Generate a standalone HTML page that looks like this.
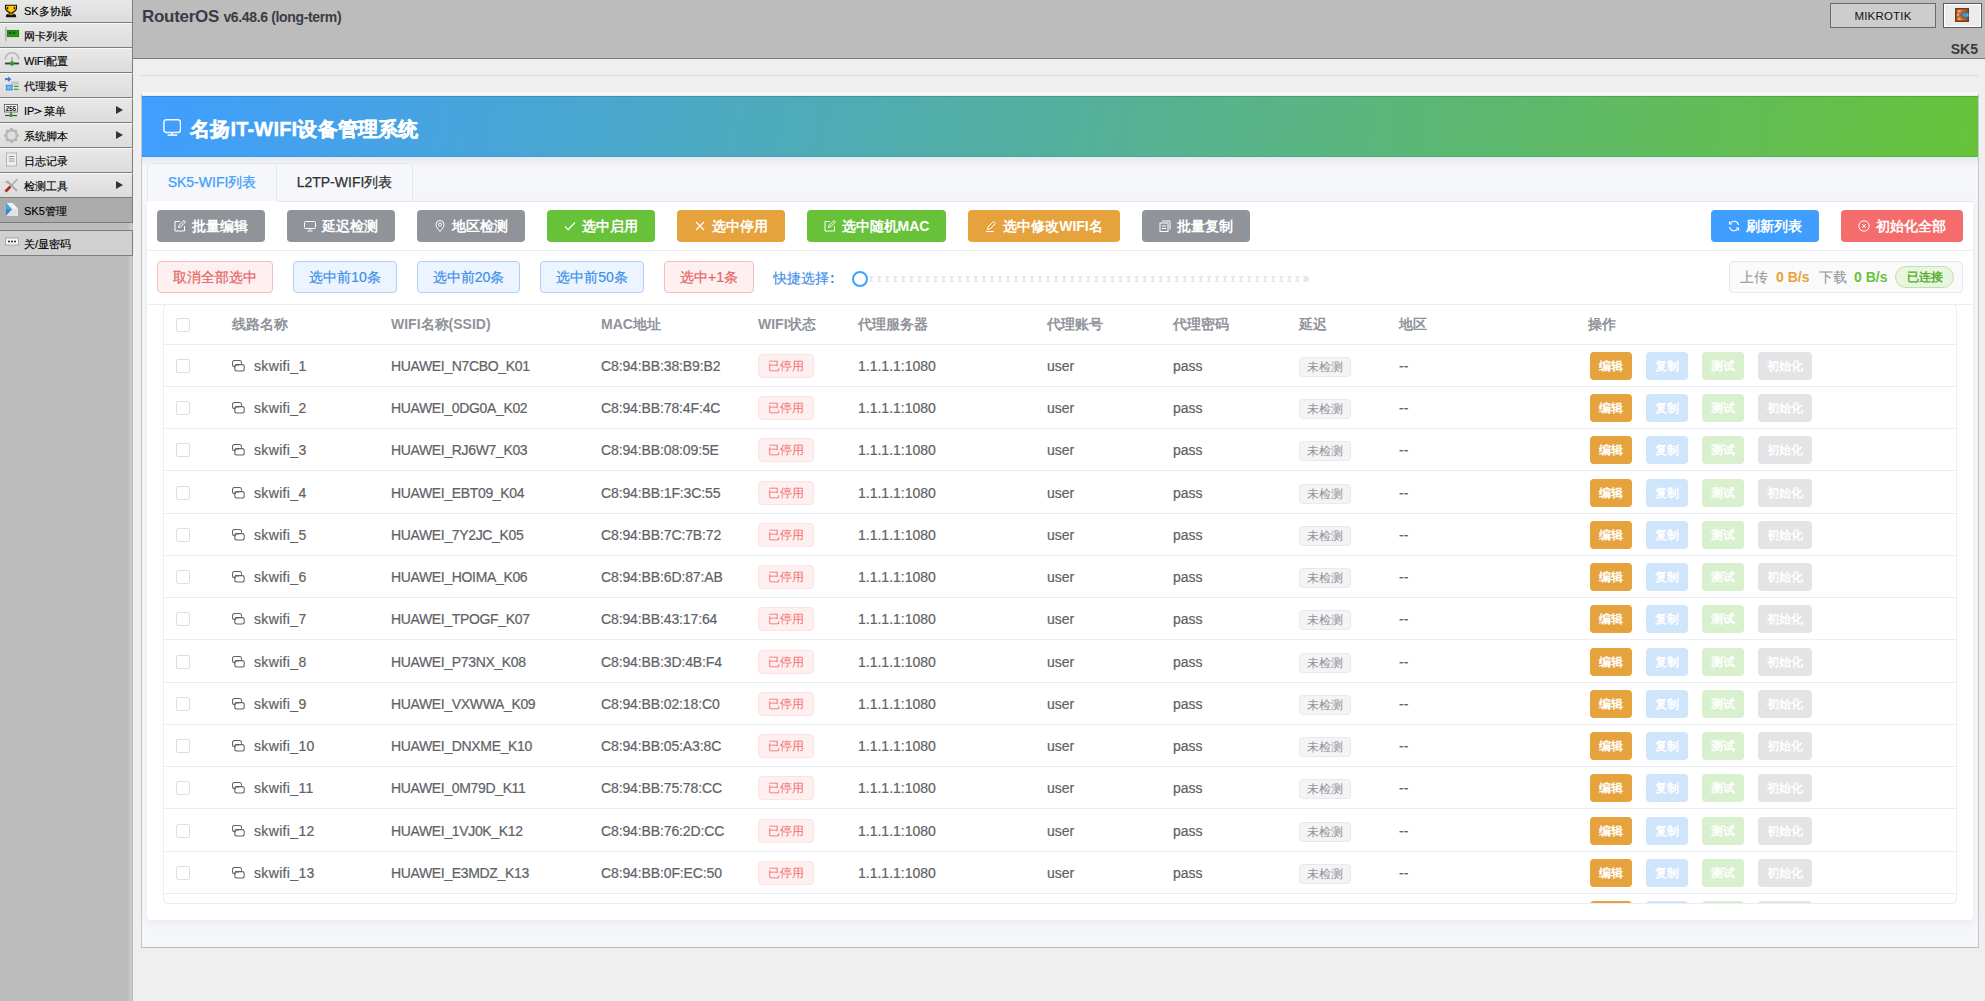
<!DOCTYPE html>
<html><head><meta charset="utf-8">
<style>
*{box-sizing:border-box;margin:0;padding:0}
html,body{width:1985px;height:1001px;overflow:hidden}
body{position:relative;background:#efefef;font-family:"Liberation Sans",sans-serif;color:#606266}
.abs{position:absolute}
/* sidebar */
#side{position:absolute;left:0;top:0;width:133px;height:1001px;background:linear-gradient(90deg,#bcbcbc 0,#bcbcbc 128px,#d0d0d0 131px,#bdbdbd 132px,#bdbdbd 133px)}
.mi{position:absolute;left:0;width:133px;height:25px;border-top:1px solid #f8f8f8;border-bottom:1px solid #7d7d7d;border-right:1px solid #7d7d7d;background:linear-gradient(#e8e8e8,#dcdcdc);font-size:11px;color:#000;line-height:25px;padding-left:24px;white-space:nowrap;-webkit-text-stroke:0.15px #000}
.mi .ic{position:absolute;left:4px;top:4px}
.mi .arr{position:absolute;left:116px;top:7px;width:0;height:0;border-top:4.5px solid transparent;border-bottom:4.5px solid transparent;border-left:7px solid #333}
.mi.sel{background:#ababab;border-top-color:#ababab}
.mi.pw{background:#d0d0d0;border-top-color:#7d7d7d;height:26px;line-height:26px}
/* topbar */
#top{position:absolute;left:133px;top:0;width:1852px;height:59px;background:#bcbcbc;border-bottom:1px solid #7b7b7b;border-left:0}
#vline{position:absolute;left:132px;top:0;width:1px;height:59px;background:#808080}
#ros{position:absolute;left:142px;top:7px;font-weight:bold;color:#3b3b45;white-space:nowrap}
#ros b{font-size:17px;letter-spacing:-0.3px}
#ros span{font-size:14px;letter-spacing:-0.35px}
#mk{position:absolute;left:1830px;top:3px;width:106px;height:25px;background:#cdcdcd;border:1px solid #6a6a6a;font-size:11.5px;letter-spacing:0.2px;color:#111;text-align:center;line-height:25px}
#lo{position:absolute;left:1943px;top:3px;width:39px;height:25px;background:#ececec;border:1px solid #5a5a5a;box-shadow:inset 0 0 0 1px #fff}
#sk5{position:absolute;right:7px;top:41px;font-size:14px;font-weight:bold;color:#3a3a3a}
/* content */
#hl{position:absolute;left:141px;top:75px;width:1837px;height:1px;background:#d9d9d9}
#panel{position:absolute;left:141px;top:93px;width:1838px;height:855px;background:linear-gradient(#efefef 0,#efefef 2px,#f5f6fa 2px,#f5f6fa 64px,#e8e8ee 64px,#f5f6fa 72px,#f5f6fa);border-top:1px solid #fff;border-left:1px solid #c6c6c6;border-right:1px solid #c6c6c6;border-bottom:1px solid #bdbdbd}
#hdr{position:absolute;left:142px;top:96px;width:1836px;height:61px;background:linear-gradient(100deg,#409eff,#67c23a);box-shadow:inset 0 1px rgba(0,0,0,.13),inset 0 -1px rgba(0,0,0,.08),0 1px #d8f2fb}
#hdr .t{position:absolute;left:48px;top:20px;font-size:20px;font-weight:bold;color:#fff;white-space:nowrap;letter-spacing:0.2px;-webkit-text-stroke:0.4px #fff}
#card{position:absolute;left:147px;top:163px;width:1826px;height:757px;background:#fff;border-radius:4px;box-shadow:0 2px 12px rgba(0,0,0,.06)}
#tabs{position:absolute;left:147px;top:163px;width:1826px;height:38px;background:#f5f7fa;border:1px solid #e4e7ed;border-bottom:1px solid #e4e7ed;border-radius:4px 4px 0 0}

#card{position:absolute;left:147px;top:201px;width:1826px;height:719px;background:#fff;border-radius:0 0 4px 4px;box-shadow:0 3px 10px rgba(0,0,0,.05)}
#tabline{position:absolute;left:147px;top:201px;width:1826px;height:1px;background:#e4e7ed}
.tab{position:absolute;top:163px;height:39px;background:#f5f7fa;border:1px solid #e4e7ed;border-bottom:0;font-size:14px;line-height:37px;text-align:center;color:#303133;white-space:nowrap;-webkit-text-stroke:0.25px #303133}
.tab.act{-webkit-text-stroke:0.25px #409eff;color:#409eff;background:#f5f7fa;border-bottom:1px solid #fff;height:39px}
.btn{position:absolute;height:32px;border-radius:4px;color:#fff;font-size:14px;font-weight:bold;line-height:32px;text-align:center;white-space:nowrap}
.btn svg{vertical-align:-1px;margin-right:6px}
.g{background:#909399}.gr{background:#67c23a}.o{background:#e6a23c}.b{background:#409eff}.r{background:#f56c6c}
.pb{position:absolute;top:261px;height:32px;border-radius:4px;font-size:14px;line-height:30px;text-align:center;white-space:nowrap}
.pr{background:#fef0f0;border:1px solid #f3bdbd;color:#e46464;-webkit-text-stroke:0.2px #e46464}
.pbl{background:#ecf5ff;border:1px solid #acd0f4;color:#3d8fe8;-webkit-text-stroke:0.2px #3d8fe8}
#div1{position:absolute;left:147px;top:250px;width:1826px;height:1px;background:#ebeef5}
#div2{position:absolute;left:147px;top:304px;width:1826px;height:1px;background:#ebeef5}
#quick{position:absolute;left:773px;top:267.5px;font-size:14px;color:#3f8ee8;line-height:20px;-webkit-text-stroke:0.15px #3f8ee8}
#dots{position:absolute;left:0;top:0;width:0;height:0}
#knob{position:absolute;left:852px;top:271px;width:16px;height:16px;border:2px solid #409eff;border-radius:50%;background:#fff}
#stat{position:absolute;left:1729px;top:261px;width:234px;height:32px;border:1px solid #e4e7ed;border-radius:4px;background:#fafafa;font-size:14px;line-height:30px;white-space:nowrap}
#stat span{position:absolute;top:0}
#conn{position:absolute;left:165px;top:4px;width:59px;height:22px;border-radius:11px;background:#e8f6e0;border:1px solid #bfe3ab;color:#5aad32;font-size:12px;font-weight:bold;line-height:21px;text-align:center}

#tbl{position:absolute;left:163px;top:304px;width:1794px;height:600px;border:1px solid #ebeef5;border-radius:4px;overflow:hidden;background:#fff}
.row{position:absolute;left:0;width:1792px;height:42px;border-bottom:1px solid #ebeef5;font-size:14px;color:#606266;line-height:42px;white-space:nowrap}
.row>span{-webkit-text-stroke:0.2px #606266}
.row.hd>span{-webkit-text-stroke:0}
.row>*{position:absolute}
.hd{color:#909399;font-weight:bold;height:40px;line-height:39px}
.cb{width:14px;height:14px;border:1px solid #dcdfe6;border-radius:2px;background:#fff}
.lk{top:15px}
.tag1{height:24px;width:56px;border:1px solid #fde2e2;background:#fef0f0;color:#f56c6c;border-radius:4px;font-size:12px;line-height:22px;text-align:center}
.tag2{height:20px;width:52px;border:1px solid #e9e9eb;background:#f4f4f5;color:#909399;border-radius:4px;font-size:12px;line-height:18px;text-align:center}
.mb{height:28px;border-radius:4px;color:#fff;font-size:12px;font-weight:bold;line-height:28px;text-align:center}
.me{background:#e6a23c}.mc{background:#cfe5fc}.mt{background:#d9f0ce}.mi2{background:#e3e4e6}
</style></head><body>
<div id="side">
<div class="mi" style="top:-2px"><svg class="ic" width="22" height="22" viewBox="0 0 22 22" style="left:0;top:0"><path d="M5.5 6.3H16.5V9.3C16.5 11.6 14.3 12.8 12 13.8V14.8C13.8 15 15.6 15.8 15.6 17.6H6.4C6.4 15.8 8.2 15 10 14.8V13.8C7.7 12.8 5.5 11.6 5.5 9.3Z" fill="#f4b800" stroke="#1c1408" stroke-width="1.1"/><path d="M9 7.2h4v4.5c-1.2 0.6-2.8 0.6-4 0z" fill="#ffc81a"/><ellipse cx="7.5" cy="9.1" rx="0.75" ry="1.2" fill="#2a0a00"/><ellipse cx="14.5" cy="9.1" rx="0.75" ry="1.2" fill="#2a0a00"/><path d="M6.6 16.6h8.8" stroke="#1c1408" stroke-width="1.4"/></svg><span class="tx">SK多协版</span></div>
<div class="mi" style="top:23px"><svg class="ic" width="22" height="22" viewBox="0 0 22 22" style="left:0;top:0"><rect x="5" y="3" width="1.6" height="14" fill="#b4b8b8"/><rect x="7" y="6" width="12" height="7" fill="#239a1a"/><rect x="7.2" y="6.2" width="11.6" height="6.6" fill="none" stroke="#1a7012" stroke-width="0.5"/><rect x="8.6" y="7.6" width="2.6" height="2.6" fill="#165a10"/><rect x="12.6" y="7.6" width="2.6" height="2.6" fill="#165a10"/><path d="M7.5 13.5h11" stroke="#c8e680" stroke-width="1.2" stroke-dasharray="1 1"/></svg><span class="tx">网卡列表</span></div>
<div class="mi" style="top:48px"><svg class="ic" width="22" height="22" viewBox="0 0 22 22" style="left:0;top:0"><path d="M5.2 10.5a6.8 6.8 0 0 1 13.6 0" fill="none" stroke="#b8bcbc" stroke-width="1.8"/><path d="M12 8v6" stroke="#a8acac" stroke-width="1.6"/><path d="M5 14.5h14" stroke="#3a3a3a" stroke-width="1.8"/><circle cx="12" cy="14.5" r="2.2" fill="#1ea81e"/></svg><span class="tx">WiFi配置</span></div>
<div class="mi" style="top:73px"><svg class="ic" width="22" height="22" viewBox="0 0 22 22" style="left:0;top:0"><path d="M5 5.2h4" stroke="#3a78c4" stroke-width="2"/><path d="M8.2 2.5L11.3 5.2 8.2 8z" fill="#3a78c4"/><rect x="11" y="7.6" width="8" height="3" fill="#c4c4c4"/><rect x="6.3" y="11.3" width="5.8" height="4.6" fill="#7ab8ee" stroke="#3a88d8" stroke-width="1"/><path d="M14 12.4h4.5M14 15.4h4.5" stroke="#3aa03a" stroke-width="1.4"/></svg><span class="tx">代理拨号</span></div>
<div class="mi" style="top:98px"><svg class="ic" width="15" height="15" viewBox="0 0 15 15" style="left:4px;top:5px"><rect x="0.5" y="0.5" width="13" height="7.5" fill="#fafafa" stroke="#555" stroke-width="0.8"/><text x="1.6" y="6.6" font-size="6.4" font-family="Liberation Mono" font-weight="bold" fill="#111" textLength="10.8">255</text><path d="M7 8v3" stroke="#333" stroke-width="1"/><path d="M1 11.5h12" stroke="#444" stroke-width="1.2"/><circle cx="7" cy="11.5" r="1.8" fill="#22aa22"/></svg><span class="tx">IP<svg width="9" height="8" viewBox="0 0 9 8" style="vertical-align:0px;margin:0 1px 0 0"><path d="M0.5 1.2L8.5 4.3 0.5 7.2 0.5 6.2 5.5 4.3 0.5 2.4z" fill="#111"/></svg>菜单</span><span class="arr"></span></div>
<div class="mi" style="top:123px"><svg class="ic" width="15" height="15" viewBox="0 0 15 15" style="left:4px;top:4px"><circle cx="7.5" cy="7.5" r="5.2" fill="none" stroke="#b4b9b6" stroke-width="2.4"/><g stroke="#b4b9b6" stroke-width="2.6"><path d="M7.5 0v2.5M7.5 12.5V15M0 7.5h2.5M12.5 7.5H15M2.2 2.2l1.8 1.8M11 11l1.8 1.8M2.2 12.8L4 11M11 4l1.8-1.8"/></g><circle cx="7.5" cy="7.5" r="3.4" fill="#dedede"/></svg><span class="tx">系统脚本</span><span class="arr"></span></div>
<div class="mi" style="top:148px"><svg class="ic" width="15" height="15" viewBox="0 0 15 15" style="left:5px;top:3px"><rect x="1.5" y="1" width="10" height="13" fill="#eef0ee" stroke="#b0b4b2" stroke-width="1"/><path d="M3.8 4.5h5.5M3.8 6.8h5.5M3.8 9.1h5.5" stroke="#8a8e8c" stroke-width="0.9"/></svg><span class="tx">日志记录</span></div>
<div class="mi" style="top:173px"><svg class="ic" width="15" height="15" viewBox="0 0 15 15" style="left:4px;top:4px"><path d="M3 3l10 10" stroke="#a8acaa" stroke-width="1.8"/><path d="M13.5 1.2L6.5 8.2" stroke="#a8acaa" stroke-width="1.6"/><path d="M1.5 3.5a2.3 2.3 0 0 0 3.2 1" fill="none" stroke="#a8acaa" stroke-width="1.4"/><path d="M6.5 8.5L1.5 13.5" stroke="#b82030" stroke-width="2.6"/></svg><span class="tx">检测工具</span><span class="arr"></span></div>
<div class="mi sel" style="top:198px"><svg class="ic" width="22" height="22" viewBox="0 0 22 22" style="left:0;top:0"><path d="M6.5 4h6l5.5 5.5V17H6.5z" fill="#f2f4f4"/><path d="M12.5 4.5l5 5h-5z" fill="#fbfbfb" stroke="#d8dcdc" stroke-width="0.4"/><path d="M6.5 10.5H18V17H6.5z" fill="#dfe3e3"/><path d="M6 3.8l6 6.5-6 6.5z" fill="#2f8ad0"/><path d="M6 3.8l6 6.5H6z" fill="#4aa8e8"/></svg><span class="tx">SK5管理</span></div>
<div class="mi pw" style="top:230px"><svg class="ic" width="14" height="14" viewBox="0 0 14 14" style="left:5px"><rect x="0.5" y="3" width="13" height="7" fill="#f6f6f6" stroke="#999" stroke-width="0.8"/><circle cx="4" cy="6.5" r="0.9" fill="#111"/><circle cx="7" cy="6.5" r="0.9" fill="#111"/><circle cx="10" cy="6.5" r="0.9" fill="#111"/></svg><span class="tx">关/显密码</span></div>
</div>
<div id="top"></div><div id="vline"></div>
<div id="ros"><b>RouterOS</b> <span>v6.48.6 (long-term)</span></div>
<div id="mk">MIKROTIK</div>
<div id="lo"><svg style="position:absolute;left:11px;top:4px" width="14" height="14" viewBox="0 0 14 14"><rect x="0" y="0" width="14" height="14" fill="#7a3a10"/><rect x="1.5" y="1.5" width="11" height="11" fill="#b86a38"/><path d="M2 2h5l-3 3M2 12h5l-3-3" fill="#e8a878"/><rect x="2" y="5.5" width="2" height="2.5" fill="#e8a878"/><path d="M12.5 1.5v11L5.5 7z" fill="#7a4a28"/><path d="M11.5 3.5v7L6.5 7z" fill="#2aa0e8"/><path d="M11.5 5.5v3h2v-3z" fill="#5ab8f0"/></svg></div>
<div id="sk5">SK5</div>
<div id="hl"></div>
<div id="panel"></div>
<div id="hdr"><svg style="position:absolute;left:21px;top:23px" width="18" height="18" viewBox="0 0 18 18"><rect x="0.9" y="0.8" width="16.6" height="12.6" rx="2.6" fill="none" stroke="#f0f8ff" stroke-width="1.5"/><path d="M9.1 13.3v2.6" stroke="#f0f8ff" stroke-width="1.6"/><path d="M4.6 16.1h9.6" stroke="#f0f8ff" stroke-width="1.6"/></svg><div class="t">名扬IT-WIFI设备管理系统</div></div>
<div id="card"></div>
<div class="tab" style="left:276px;width:137px">L2TP-WIFI列表</div>
<div id="tabline"></div>
<div class="tab act" style="left:147px;width:130px">SK5-WIFI列表</div>
<div class="btn g" style="left:157px;top:210px;width:108px"><svg width="12" height="12" viewBox="0 0 12 12"><path d="M6 1.5H1v9.5h9.5V6" fill="none" stroke="#fff" stroke-width="1"/><path d="M4.5 7.5l.4-2L10 .5l1.5 1.5-5 5z" fill="none" stroke="#fff" stroke-width="1"/></svg>批量编辑</div>
<div class="btn g" style="left:287px;top:210px;width:108px"><svg width="12" height="12" viewBox="0 0 12 12"><rect x="0.5" y="1.5" width="11" height="7" rx="1" fill="none" stroke="#fff" stroke-width="1"/><path d="M6 8.5v2M3.5 11h5" stroke="#fff" stroke-width="1"/></svg>延迟检测</div>
<div class="btn g" style="left:417px;top:210px;width:108px"><svg width="12" height="12" viewBox="0 0 12 12"><path d="M6 11.5C3.5 8.5 2 6.5 2 4.5a4 4 0 0 1 8 0c0 2-1.5 4-4 7z" fill="none" stroke="#fff" stroke-width="1"/><circle cx="6" cy="4.6" r="1.5" fill="none" stroke="#fff" stroke-width="1"/></svg>地区检测</div>
<div class="btn gr" style="left:547px;top:210px;width:108px"><svg width="12" height="12" viewBox="0 0 12 12"><path d="M1 6.5l3.2 3.2L11 2.5" fill="none" stroke="#fff" stroke-width="1.2"/></svg>选中启用</div>
<div class="btn o" style="left:677px;top:210px;width:108px"><svg width="12" height="12" viewBox="0 0 12 12"><path d="M2 2l8 8M10 2l-8 8" fill="none" stroke="#fff" stroke-width="1.1"/></svg>选中停用</div>
<div class="btn gr" style="left:807px;top:210px;width:139px"><svg width="12" height="12" viewBox="0 0 12 12"><path d="M6 1.5H1v9.5h9.5V6" fill="none" stroke="#fff" stroke-width="1"/><path d="M4.5 7.5l.4-2L10 .5l1.5 1.5-5 5z" fill="none" stroke="#fff" stroke-width="1"/></svg>选中随机MAC</div>
<div class="btn o" style="left:968px;top:210px;width:152px"><svg width="12" height="12" viewBox="0 0 12 12"><path d="M2.5 9.5l.5-2.5L8.5 1.5l2 2L5 9z" fill="none" stroke="#fff" stroke-width="1"/><path d="M1 11.5h8" stroke="#fff" stroke-width="1"/></svg>选中修改WIFI名</div>
<div class="btn g" style="left:1142px;top:210px;width:108px"><svg width="12" height="12" viewBox="0 0 12 12"><rect x="1" y="3" width="8" height="8.5" fill="none" stroke="#fff" stroke-width="1"/><path d="M3 1h8v8.5" fill="none" stroke="#fff" stroke-width="1"/><path d="M3 6h4M3 8.5h4" stroke="#fff" stroke-width="1"/></svg>批量复制</div>
<div class="btn b" style="left:1711px;top:210px;width:108px"><svg width="12" height="12" viewBox="0 0 12 12"><path d="M10.5 5A4.6 4.6 0 0 0 2 3.5M1.5 7A4.6 4.6 0 0 0 10 8.5" fill="none" stroke="#fff" stroke-width="1.1"/><path d="M1.5 1.5v2.5H4M10.5 10.5V8H8" fill="none" stroke="#fff" stroke-width="1.1"/></svg>刷新列表</div>
<div class="btn r" style="left:1841px;top:210px;width:122px"><svg width="12" height="12" viewBox="0 0 12 12"><circle cx="6" cy="6" r="5.2" fill="none" stroke="#fff" stroke-width="1"/><path d="M4 4l4 4M8 4l-4 4" stroke="#fff" stroke-width="1"/></svg>初始化全部</div>
<div id="div1"></div>
<div class="pb pr" style="left:157px;width:116px">取消全部选中</div>
<div class="pb pbl" style="left:293px;width:104px">选中前10条</div>
<div class="pb pbl" style="left:417px;width:103px">选中前20条</div>
<div class="pb pbl" style="left:540px;width:104px">选中前50条</div>
<div class="pb pr" style="left:664px;width:90px">选中+1条</div>
<div id="quick">快捷选择<b style="font-weight:bold;margin-left:1px">:</b></div><div id="dots"><svg style="position:absolute;left:0;top:0" width="1985" height="1001"><g fill="#e4e7ed"><path d="M869.00 276h4.5v1.2h-1.3v3.6h1.3v1.2h-4.5v-1.2h1.3v-3.6h-1.3z"/><path d="M877.04 276h4.5v1.2h-1.3v3.6h1.3v1.2h-4.5v-1.2h1.3v-3.6h-1.3z"/><path d="M885.08 276h4.5v1.2h-1.3v3.6h1.3v1.2h-4.5v-1.2h1.3v-3.6h-1.3z"/><path d="M893.12 276h4.5v1.2h-1.3v3.6h1.3v1.2h-4.5v-1.2h1.3v-3.6h-1.3z"/><path d="M901.16 276h4.5v1.2h-1.3v3.6h1.3v1.2h-4.5v-1.2h1.3v-3.6h-1.3z"/><path d="M909.20 276h4.5v1.2h-1.3v3.6h1.3v1.2h-4.5v-1.2h1.3v-3.6h-1.3z"/><path d="M917.24 276h4.5v1.2h-1.3v3.6h1.3v1.2h-4.5v-1.2h1.3v-3.6h-1.3z"/><path d="M925.28 276h4.5v1.2h-1.3v3.6h1.3v1.2h-4.5v-1.2h1.3v-3.6h-1.3z"/><path d="M933.32 276h4.5v1.2h-1.3v3.6h1.3v1.2h-4.5v-1.2h1.3v-3.6h-1.3z"/><path d="M941.36 276h4.5v1.2h-1.3v3.6h1.3v1.2h-4.5v-1.2h1.3v-3.6h-1.3z"/><path d="M949.40 276h4.5v1.2h-1.3v3.6h1.3v1.2h-4.5v-1.2h1.3v-3.6h-1.3z"/><path d="M957.44 276h4.5v1.2h-1.3v3.6h1.3v1.2h-4.5v-1.2h1.3v-3.6h-1.3z"/><path d="M965.48 276h4.5v1.2h-1.3v3.6h1.3v1.2h-4.5v-1.2h1.3v-3.6h-1.3z"/><path d="M973.52 276h4.5v1.2h-1.3v3.6h1.3v1.2h-4.5v-1.2h1.3v-3.6h-1.3z"/><path d="M981.56 276h4.5v1.2h-1.3v3.6h1.3v1.2h-4.5v-1.2h1.3v-3.6h-1.3z"/><path d="M989.60 276h4.5v1.2h-1.3v3.6h1.3v1.2h-4.5v-1.2h1.3v-3.6h-1.3z"/><path d="M997.64 276h4.5v1.2h-1.3v3.6h1.3v1.2h-4.5v-1.2h1.3v-3.6h-1.3z"/><path d="M1005.68 276h4.5v1.2h-1.3v3.6h1.3v1.2h-4.5v-1.2h1.3v-3.6h-1.3z"/><path d="M1013.72 276h4.5v1.2h-1.3v3.6h1.3v1.2h-4.5v-1.2h1.3v-3.6h-1.3z"/><path d="M1021.76 276h4.5v1.2h-1.3v3.6h1.3v1.2h-4.5v-1.2h1.3v-3.6h-1.3z"/><path d="M1029.80 276h4.5v1.2h-1.3v3.6h1.3v1.2h-4.5v-1.2h1.3v-3.6h-1.3z"/><path d="M1037.84 276h4.5v1.2h-1.3v3.6h1.3v1.2h-4.5v-1.2h1.3v-3.6h-1.3z"/><path d="M1045.88 276h4.5v1.2h-1.3v3.6h1.3v1.2h-4.5v-1.2h1.3v-3.6h-1.3z"/><path d="M1053.92 276h4.5v1.2h-1.3v3.6h1.3v1.2h-4.5v-1.2h1.3v-3.6h-1.3z"/><path d="M1061.96 276h4.5v1.2h-1.3v3.6h1.3v1.2h-4.5v-1.2h1.3v-3.6h-1.3z"/><path d="M1070.00 276h4.5v1.2h-1.3v3.6h1.3v1.2h-4.5v-1.2h1.3v-3.6h-1.3z"/><path d="M1078.04 276h4.5v1.2h-1.3v3.6h1.3v1.2h-4.5v-1.2h1.3v-3.6h-1.3z"/><path d="M1086.08 276h4.5v1.2h-1.3v3.6h1.3v1.2h-4.5v-1.2h1.3v-3.6h-1.3z"/><path d="M1094.12 276h4.5v1.2h-1.3v3.6h1.3v1.2h-4.5v-1.2h1.3v-3.6h-1.3z"/><path d="M1102.16 276h4.5v1.2h-1.3v3.6h1.3v1.2h-4.5v-1.2h1.3v-3.6h-1.3z"/><path d="M1110.20 276h4.5v1.2h-1.3v3.6h1.3v1.2h-4.5v-1.2h1.3v-3.6h-1.3z"/><path d="M1118.24 276h4.5v1.2h-1.3v3.6h1.3v1.2h-4.5v-1.2h1.3v-3.6h-1.3z"/><path d="M1126.28 276h4.5v1.2h-1.3v3.6h1.3v1.2h-4.5v-1.2h1.3v-3.6h-1.3z"/><path d="M1134.32 276h4.5v1.2h-1.3v3.6h1.3v1.2h-4.5v-1.2h1.3v-3.6h-1.3z"/><path d="M1142.36 276h4.5v1.2h-1.3v3.6h1.3v1.2h-4.5v-1.2h1.3v-3.6h-1.3z"/><path d="M1150.40 276h4.5v1.2h-1.3v3.6h1.3v1.2h-4.5v-1.2h1.3v-3.6h-1.3z"/><path d="M1158.44 276h4.5v1.2h-1.3v3.6h1.3v1.2h-4.5v-1.2h1.3v-3.6h-1.3z"/><path d="M1166.48 276h4.5v1.2h-1.3v3.6h1.3v1.2h-4.5v-1.2h1.3v-3.6h-1.3z"/><path d="M1174.52 276h4.5v1.2h-1.3v3.6h1.3v1.2h-4.5v-1.2h1.3v-3.6h-1.3z"/><path d="M1182.56 276h4.5v1.2h-1.3v3.6h1.3v1.2h-4.5v-1.2h1.3v-3.6h-1.3z"/><path d="M1190.60 276h4.5v1.2h-1.3v3.6h1.3v1.2h-4.5v-1.2h1.3v-3.6h-1.3z"/><path d="M1198.64 276h4.5v1.2h-1.3v3.6h1.3v1.2h-4.5v-1.2h1.3v-3.6h-1.3z"/><path d="M1206.68 276h4.5v1.2h-1.3v3.6h1.3v1.2h-4.5v-1.2h1.3v-3.6h-1.3z"/><path d="M1214.72 276h4.5v1.2h-1.3v3.6h1.3v1.2h-4.5v-1.2h1.3v-3.6h-1.3z"/><path d="M1222.76 276h4.5v1.2h-1.3v3.6h1.3v1.2h-4.5v-1.2h1.3v-3.6h-1.3z"/><path d="M1230.80 276h4.5v1.2h-1.3v3.6h1.3v1.2h-4.5v-1.2h1.3v-3.6h-1.3z"/><path d="M1238.84 276h4.5v1.2h-1.3v3.6h1.3v1.2h-4.5v-1.2h1.3v-3.6h-1.3z"/><path d="M1246.88 276h4.5v1.2h-1.3v3.6h1.3v1.2h-4.5v-1.2h1.3v-3.6h-1.3z"/><path d="M1254.92 276h4.5v1.2h-1.3v3.6h1.3v1.2h-4.5v-1.2h1.3v-3.6h-1.3z"/><path d="M1262.96 276h4.5v1.2h-1.3v3.6h1.3v1.2h-4.5v-1.2h1.3v-3.6h-1.3z"/><path d="M1271.00 276h4.5v1.2h-1.3v3.6h1.3v1.2h-4.5v-1.2h1.3v-3.6h-1.3z"/><path d="M1279.04 276h4.5v1.2h-1.3v3.6h1.3v1.2h-4.5v-1.2h1.3v-3.6h-1.3z"/><path d="M1287.08 276h4.5v1.2h-1.3v3.6h1.3v1.2h-4.5v-1.2h1.3v-3.6h-1.3z"/><path d="M1295.12 276h4.5v1.2h-1.3v3.6h1.3v1.2h-4.5v-1.2h1.3v-3.6h-1.3z"/><path d="M1303.5 276h2.5a3 3 0 0 1 0 6h-2.5z"/></g></svg></div><div id="knob"></div>
<div id="stat"><span style="left:10px;color:#909399">上传</span><span style="left:46px;color:#e6a23c;font-weight:bold">0 B/s</span><span style="left:89px;color:#909399">下载</span><span style="left:124px;color:#67c23a;font-weight:bold">0 B/s</span><div id="conn">已连接</div></div>
<div id="div2"></div>
<div id="tbl">
<div class="row hd" style="top:0"><div class="cb" style="left:12px;top:13px"></div><span style="left:68px">线路名称</span><span style="left:227px">WIFI名称(SSID)</span><span style="left:437px">MAC地址</span><span style="left:594px">WIFI状态</span><span style="left:694px">代理服务器</span><span style="left:883px">代理账号</span><span style="left:1009px">代理密码</span><span style="left:1135px">延迟</span><span style="left:1235px">地区</span><span style="left:1424px">操作</span></div>
<div class="row" style="top:40px"><div class="cb" style="left:12px;top:14px"></div><span class="lk" style="left:68px;line-height:0"><svg width="13" height="12" viewBox="0 0 13 12"><path d="M4 6.8H2.5a2 2 0 0 1-2-2V2.5a2 2 0 0 1 2-2h5a2 2 0 0 1 2 2v1.2" fill="none" stroke="#606266" stroke-width="1.05"/><rect x="2.8" y="4.6" width="9.4" height="6.3" rx="2" fill="none" stroke="#606266" stroke-width="1.05"/><path d="M2.8 4.9h4.2" stroke="#606266" stroke-width="1.05"/></svg></span><span style="left:90px;letter-spacing:0.35px">skwifi_1</span><span style="left:227px;letter-spacing:-0.35px">HUAWEI_N7CBO_K01</span><span style="left:437px;letter-spacing:-0.12px">C8:94:BB:38:B9:B2</span><div class="tag1" style="left:594px;top:9px">已停用</div><span style="left:694px">1.1.1.1:1080</span><span style="left:883px">user</span><span style="left:1009px">pass</span><div class="tag2" style="left:1135px;top:12px">未检测</div><span style="left:1235px">--</span><div class="mb me" style="left:1426px;top:7px;width:42px">编辑</div><div class="mb mc" style="left:1482px;top:7px;width:42px">复制</div><div class="mb mt" style="left:1538px;top:7px;width:42px">测试</div><div class="mb mi2" style="left:1594px;top:7px;width:54px">初始化</div></div>
<div class="row" style="top:82px"><div class="cb" style="left:12px;top:14px"></div><span class="lk" style="left:68px;line-height:0"><svg width="13" height="12" viewBox="0 0 13 12"><path d="M4 6.8H2.5a2 2 0 0 1-2-2V2.5a2 2 0 0 1 2-2h5a2 2 0 0 1 2 2v1.2" fill="none" stroke="#606266" stroke-width="1.05"/><rect x="2.8" y="4.6" width="9.4" height="6.3" rx="2" fill="none" stroke="#606266" stroke-width="1.05"/><path d="M2.8 4.9h4.2" stroke="#606266" stroke-width="1.05"/></svg></span><span style="left:90px;letter-spacing:0.35px">skwifi_2</span><span style="left:227px;letter-spacing:-0.35px">HUAWEI_0DG0A_K02</span><span style="left:437px;letter-spacing:-0.12px">C8:94:BB:78:4F:4C</span><div class="tag1" style="left:594px;top:9px">已停用</div><span style="left:694px">1.1.1.1:1080</span><span style="left:883px">user</span><span style="left:1009px">pass</span><div class="tag2" style="left:1135px;top:12px">未检测</div><span style="left:1235px">--</span><div class="mb me" style="left:1426px;top:7px;width:42px">编辑</div><div class="mb mc" style="left:1482px;top:7px;width:42px">复制</div><div class="mb mt" style="left:1538px;top:7px;width:42px">测试</div><div class="mb mi2" style="left:1594px;top:7px;width:54px">初始化</div></div>
<div class="row" style="top:124px"><div class="cb" style="left:12px;top:14px"></div><span class="lk" style="left:68px;line-height:0"><svg width="13" height="12" viewBox="0 0 13 12"><path d="M4 6.8H2.5a2 2 0 0 1-2-2V2.5a2 2 0 0 1 2-2h5a2 2 0 0 1 2 2v1.2" fill="none" stroke="#606266" stroke-width="1.05"/><rect x="2.8" y="4.6" width="9.4" height="6.3" rx="2" fill="none" stroke="#606266" stroke-width="1.05"/><path d="M2.8 4.9h4.2" stroke="#606266" stroke-width="1.05"/></svg></span><span style="left:90px;letter-spacing:0.35px">skwifi_3</span><span style="left:227px;letter-spacing:-0.35px">HUAWEI_RJ6W7_K03</span><span style="left:437px;letter-spacing:-0.12px">C8:94:BB:08:09:5E</span><div class="tag1" style="left:594px;top:9px">已停用</div><span style="left:694px">1.1.1.1:1080</span><span style="left:883px">user</span><span style="left:1009px">pass</span><div class="tag2" style="left:1135px;top:12px">未检测</div><span style="left:1235px">--</span><div class="mb me" style="left:1426px;top:7px;width:42px">编辑</div><div class="mb mc" style="left:1482px;top:7px;width:42px">复制</div><div class="mb mt" style="left:1538px;top:7px;width:42px">测试</div><div class="mb mi2" style="left:1594px;top:7px;width:54px">初始化</div></div>
<div class="row" style="top:167px"><div class="cb" style="left:12px;top:14px"></div><span class="lk" style="left:68px;line-height:0"><svg width="13" height="12" viewBox="0 0 13 12"><path d="M4 6.8H2.5a2 2 0 0 1-2-2V2.5a2 2 0 0 1 2-2h5a2 2 0 0 1 2 2v1.2" fill="none" stroke="#606266" stroke-width="1.05"/><rect x="2.8" y="4.6" width="9.4" height="6.3" rx="2" fill="none" stroke="#606266" stroke-width="1.05"/><path d="M2.8 4.9h4.2" stroke="#606266" stroke-width="1.05"/></svg></span><span style="left:90px;letter-spacing:0.35px">skwifi_4</span><span style="left:227px;letter-spacing:-0.35px">HUAWEI_EBT09_K04</span><span style="left:437px;letter-spacing:-0.12px">C8:94:BB:1F:3C:55</span><div class="tag1" style="left:594px;top:9px">已停用</div><span style="left:694px">1.1.1.1:1080</span><span style="left:883px">user</span><span style="left:1009px">pass</span><div class="tag2" style="left:1135px;top:12px">未检测</div><span style="left:1235px">--</span><div class="mb me" style="left:1426px;top:7px;width:42px">编辑</div><div class="mb mc" style="left:1482px;top:7px;width:42px">复制</div><div class="mb mt" style="left:1538px;top:7px;width:42px">测试</div><div class="mb mi2" style="left:1594px;top:7px;width:54px">初始化</div></div>
<div class="row" style="top:209px"><div class="cb" style="left:12px;top:14px"></div><span class="lk" style="left:68px;line-height:0"><svg width="13" height="12" viewBox="0 0 13 12"><path d="M4 6.8H2.5a2 2 0 0 1-2-2V2.5a2 2 0 0 1 2-2h5a2 2 0 0 1 2 2v1.2" fill="none" stroke="#606266" stroke-width="1.05"/><rect x="2.8" y="4.6" width="9.4" height="6.3" rx="2" fill="none" stroke="#606266" stroke-width="1.05"/><path d="M2.8 4.9h4.2" stroke="#606266" stroke-width="1.05"/></svg></span><span style="left:90px;letter-spacing:0.35px">skwifi_5</span><span style="left:227px;letter-spacing:-0.35px">HUAWEI_7Y2JC_K05</span><span style="left:437px;letter-spacing:-0.12px">C8:94:BB:7C:7B:72</span><div class="tag1" style="left:594px;top:9px">已停用</div><span style="left:694px">1.1.1.1:1080</span><span style="left:883px">user</span><span style="left:1009px">pass</span><div class="tag2" style="left:1135px;top:12px">未检测</div><span style="left:1235px">--</span><div class="mb me" style="left:1426px;top:7px;width:42px">编辑</div><div class="mb mc" style="left:1482px;top:7px;width:42px">复制</div><div class="mb mt" style="left:1538px;top:7px;width:42px">测试</div><div class="mb mi2" style="left:1594px;top:7px;width:54px">初始化</div></div>
<div class="row" style="top:251px"><div class="cb" style="left:12px;top:14px"></div><span class="lk" style="left:68px;line-height:0"><svg width="13" height="12" viewBox="0 0 13 12"><path d="M4 6.8H2.5a2 2 0 0 1-2-2V2.5a2 2 0 0 1 2-2h5a2 2 0 0 1 2 2v1.2" fill="none" stroke="#606266" stroke-width="1.05"/><rect x="2.8" y="4.6" width="9.4" height="6.3" rx="2" fill="none" stroke="#606266" stroke-width="1.05"/><path d="M2.8 4.9h4.2" stroke="#606266" stroke-width="1.05"/></svg></span><span style="left:90px;letter-spacing:0.35px">skwifi_6</span><span style="left:227px;letter-spacing:-0.35px">HUAWEI_HOIMA_K06</span><span style="left:437px;letter-spacing:-0.12px">C8:94:BB:6D:87:AB</span><div class="tag1" style="left:594px;top:9px">已停用</div><span style="left:694px">1.1.1.1:1080</span><span style="left:883px">user</span><span style="left:1009px">pass</span><div class="tag2" style="left:1135px;top:12px">未检测</div><span style="left:1235px">--</span><div class="mb me" style="left:1426px;top:7px;width:42px">编辑</div><div class="mb mc" style="left:1482px;top:7px;width:42px">复制</div><div class="mb mt" style="left:1538px;top:7px;width:42px">测试</div><div class="mb mi2" style="left:1594px;top:7px;width:54px">初始化</div></div>
<div class="row" style="top:293px"><div class="cb" style="left:12px;top:14px"></div><span class="lk" style="left:68px;line-height:0"><svg width="13" height="12" viewBox="0 0 13 12"><path d="M4 6.8H2.5a2 2 0 0 1-2-2V2.5a2 2 0 0 1 2-2h5a2 2 0 0 1 2 2v1.2" fill="none" stroke="#606266" stroke-width="1.05"/><rect x="2.8" y="4.6" width="9.4" height="6.3" rx="2" fill="none" stroke="#606266" stroke-width="1.05"/><path d="M2.8 4.9h4.2" stroke="#606266" stroke-width="1.05"/></svg></span><span style="left:90px;letter-spacing:0.35px">skwifi_7</span><span style="left:227px;letter-spacing:-0.35px">HUAWEI_TPOGF_K07</span><span style="left:437px;letter-spacing:-0.12px">C8:94:BB:43:17:64</span><div class="tag1" style="left:594px;top:9px">已停用</div><span style="left:694px">1.1.1.1:1080</span><span style="left:883px">user</span><span style="left:1009px">pass</span><div class="tag2" style="left:1135px;top:12px">未检测</div><span style="left:1235px">--</span><div class="mb me" style="left:1426px;top:7px;width:42px">编辑</div><div class="mb mc" style="left:1482px;top:7px;width:42px">复制</div><div class="mb mt" style="left:1538px;top:7px;width:42px">测试</div><div class="mb mi2" style="left:1594px;top:7px;width:54px">初始化</div></div>
<div class="row" style="top:336px"><div class="cb" style="left:12px;top:14px"></div><span class="lk" style="left:68px;line-height:0"><svg width="13" height="12" viewBox="0 0 13 12"><path d="M4 6.8H2.5a2 2 0 0 1-2-2V2.5a2 2 0 0 1 2-2h5a2 2 0 0 1 2 2v1.2" fill="none" stroke="#606266" stroke-width="1.05"/><rect x="2.8" y="4.6" width="9.4" height="6.3" rx="2" fill="none" stroke="#606266" stroke-width="1.05"/><path d="M2.8 4.9h4.2" stroke="#606266" stroke-width="1.05"/></svg></span><span style="left:90px;letter-spacing:0.35px">skwifi_8</span><span style="left:227px;letter-spacing:-0.35px">HUAWEI_P73NX_K08</span><span style="left:437px;letter-spacing:-0.12px">C8:94:BB:3D:4B:F4</span><div class="tag1" style="left:594px;top:9px">已停用</div><span style="left:694px">1.1.1.1:1080</span><span style="left:883px">user</span><span style="left:1009px">pass</span><div class="tag2" style="left:1135px;top:12px">未检测</div><span style="left:1235px">--</span><div class="mb me" style="left:1426px;top:7px;width:42px">编辑</div><div class="mb mc" style="left:1482px;top:7px;width:42px">复制</div><div class="mb mt" style="left:1538px;top:7px;width:42px">测试</div><div class="mb mi2" style="left:1594px;top:7px;width:54px">初始化</div></div>
<div class="row" style="top:378px"><div class="cb" style="left:12px;top:14px"></div><span class="lk" style="left:68px;line-height:0"><svg width="13" height="12" viewBox="0 0 13 12"><path d="M4 6.8H2.5a2 2 0 0 1-2-2V2.5a2 2 0 0 1 2-2h5a2 2 0 0 1 2 2v1.2" fill="none" stroke="#606266" stroke-width="1.05"/><rect x="2.8" y="4.6" width="9.4" height="6.3" rx="2" fill="none" stroke="#606266" stroke-width="1.05"/><path d="M2.8 4.9h4.2" stroke="#606266" stroke-width="1.05"/></svg></span><span style="left:90px;letter-spacing:0.35px">skwifi_9</span><span style="left:227px;letter-spacing:-0.35px">HUAWEI_VXWWA_K09</span><span style="left:437px;letter-spacing:-0.12px">C8:94:BB:02:18:C0</span><div class="tag1" style="left:594px;top:9px">已停用</div><span style="left:694px">1.1.1.1:1080</span><span style="left:883px">user</span><span style="left:1009px">pass</span><div class="tag2" style="left:1135px;top:12px">未检测</div><span style="left:1235px">--</span><div class="mb me" style="left:1426px;top:7px;width:42px">编辑</div><div class="mb mc" style="left:1482px;top:7px;width:42px">复制</div><div class="mb mt" style="left:1538px;top:7px;width:42px">测试</div><div class="mb mi2" style="left:1594px;top:7px;width:54px">初始化</div></div>
<div class="row" style="top:420px"><div class="cb" style="left:12px;top:14px"></div><span class="lk" style="left:68px;line-height:0"><svg width="13" height="12" viewBox="0 0 13 12"><path d="M4 6.8H2.5a2 2 0 0 1-2-2V2.5a2 2 0 0 1 2-2h5a2 2 0 0 1 2 2v1.2" fill="none" stroke="#606266" stroke-width="1.05"/><rect x="2.8" y="4.6" width="9.4" height="6.3" rx="2" fill="none" stroke="#606266" stroke-width="1.05"/><path d="M2.8 4.9h4.2" stroke="#606266" stroke-width="1.05"/></svg></span><span style="left:90px;letter-spacing:0.35px">skwifi_10</span><span style="left:227px;letter-spacing:-0.35px">HUAWEI_DNXME_K10</span><span style="left:437px;letter-spacing:-0.12px">C8:94:BB:05:A3:8C</span><div class="tag1" style="left:594px;top:9px">已停用</div><span style="left:694px">1.1.1.1:1080</span><span style="left:883px">user</span><span style="left:1009px">pass</span><div class="tag2" style="left:1135px;top:12px">未检测</div><span style="left:1235px">--</span><div class="mb me" style="left:1426px;top:7px;width:42px">编辑</div><div class="mb mc" style="left:1482px;top:7px;width:42px">复制</div><div class="mb mt" style="left:1538px;top:7px;width:42px">测试</div><div class="mb mi2" style="left:1594px;top:7px;width:54px">初始化</div></div>
<div class="row" style="top:462px"><div class="cb" style="left:12px;top:14px"></div><span class="lk" style="left:68px;line-height:0"><svg width="13" height="12" viewBox="0 0 13 12"><path d="M4 6.8H2.5a2 2 0 0 1-2-2V2.5a2 2 0 0 1 2-2h5a2 2 0 0 1 2 2v1.2" fill="none" stroke="#606266" stroke-width="1.05"/><rect x="2.8" y="4.6" width="9.4" height="6.3" rx="2" fill="none" stroke="#606266" stroke-width="1.05"/><path d="M2.8 4.9h4.2" stroke="#606266" stroke-width="1.05"/></svg></span><span style="left:90px;letter-spacing:0.35px">skwifi_11</span><span style="left:227px;letter-spacing:-0.35px">HUAWEI_0M79D_K11</span><span style="left:437px;letter-spacing:-0.12px">C8:94:BB:75:78:CC</span><div class="tag1" style="left:594px;top:9px">已停用</div><span style="left:694px">1.1.1.1:1080</span><span style="left:883px">user</span><span style="left:1009px">pass</span><div class="tag2" style="left:1135px;top:12px">未检测</div><span style="left:1235px">--</span><div class="mb me" style="left:1426px;top:7px;width:42px">编辑</div><div class="mb mc" style="left:1482px;top:7px;width:42px">复制</div><div class="mb mt" style="left:1538px;top:7px;width:42px">测试</div><div class="mb mi2" style="left:1594px;top:7px;width:54px">初始化</div></div>
<div class="row" style="top:505px"><div class="cb" style="left:12px;top:14px"></div><span class="lk" style="left:68px;line-height:0"><svg width="13" height="12" viewBox="0 0 13 12"><path d="M4 6.8H2.5a2 2 0 0 1-2-2V2.5a2 2 0 0 1 2-2h5a2 2 0 0 1 2 2v1.2" fill="none" stroke="#606266" stroke-width="1.05"/><rect x="2.8" y="4.6" width="9.4" height="6.3" rx="2" fill="none" stroke="#606266" stroke-width="1.05"/><path d="M2.8 4.9h4.2" stroke="#606266" stroke-width="1.05"/></svg></span><span style="left:90px;letter-spacing:0.35px">skwifi_12</span><span style="left:227px;letter-spacing:-0.35px">HUAWEI_1VJ0K_K12</span><span style="left:437px;letter-spacing:-0.12px">C8:94:BB:76:2D:CC</span><div class="tag1" style="left:594px;top:9px">已停用</div><span style="left:694px">1.1.1.1:1080</span><span style="left:883px">user</span><span style="left:1009px">pass</span><div class="tag2" style="left:1135px;top:12px">未检测</div><span style="left:1235px">--</span><div class="mb me" style="left:1426px;top:7px;width:42px">编辑</div><div class="mb mc" style="left:1482px;top:7px;width:42px">复制</div><div class="mb mt" style="left:1538px;top:7px;width:42px">测试</div><div class="mb mi2" style="left:1594px;top:7px;width:54px">初始化</div></div>
<div class="row" style="top:547px"><div class="cb" style="left:12px;top:14px"></div><span class="lk" style="left:68px;line-height:0"><svg width="13" height="12" viewBox="0 0 13 12"><path d="M4 6.8H2.5a2 2 0 0 1-2-2V2.5a2 2 0 0 1 2-2h5a2 2 0 0 1 2 2v1.2" fill="none" stroke="#606266" stroke-width="1.05"/><rect x="2.8" y="4.6" width="9.4" height="6.3" rx="2" fill="none" stroke="#606266" stroke-width="1.05"/><path d="M2.8 4.9h4.2" stroke="#606266" stroke-width="1.05"/></svg></span><span style="left:90px;letter-spacing:0.35px">skwifi_13</span><span style="left:227px;letter-spacing:-0.35px">HUAWEI_E3MDZ_K13</span><span style="left:437px;letter-spacing:-0.12px">C8:94:BB:0F:EC:50</span><div class="tag1" style="left:594px;top:9px">已停用</div><span style="left:694px">1.1.1.1:1080</span><span style="left:883px">user</span><span style="left:1009px">pass</span><div class="tag2" style="left:1135px;top:12px">未检测</div><span style="left:1235px">--</span><div class="mb me" style="left:1426px;top:7px;width:42px">编辑</div><div class="mb mc" style="left:1482px;top:7px;width:42px">复制</div><div class="mb mt" style="left:1538px;top:7px;width:42px">测试</div><div class="mb mi2" style="left:1594px;top:7px;width:54px">初始化</div></div>
<div class="row" style="top:589px"><div class="cb" style="left:12px;top:14px"></div><span class="lk" style="left:68px;line-height:0"><svg width="13" height="12" viewBox="0 0 13 12"><path d="M4 6.8H2.5a2 2 0 0 1-2-2V2.5a2 2 0 0 1 2-2h5a2 2 0 0 1 2 2v1.2" fill="none" stroke="#606266" stroke-width="1.05"/><rect x="2.8" y="4.6" width="9.4" height="6.3" rx="2" fill="none" stroke="#606266" stroke-width="1.05"/><path d="M2.8 4.9h4.2" stroke="#606266" stroke-width="1.05"/></svg></span><span style="left:90px;letter-spacing:0.35px">skwifi_14</span><span style="left:227px;letter-spacing:-0.35px">HUAWEI_XXXXX_K14</span><span style="left:437px;letter-spacing:-0.12px">C8:94:BB:00:00:00</span><div class="tag1" style="left:594px;top:9px">已停用</div><span style="left:694px">1.1.1.1:1080</span><span style="left:883px">user</span><span style="left:1009px">pass</span><div class="tag2" style="left:1135px;top:12px">未检测</div><span style="left:1235px">--</span><div class="mb me" style="left:1426px;top:7px;width:42px">编辑</div><div class="mb mc" style="left:1482px;top:7px;width:42px">复制</div><div class="mb mt" style="left:1538px;top:7px;width:42px">测试</div><div class="mb mi2" style="left:1594px;top:7px;width:54px">初始化</div></div>
</div>
</body></html>
